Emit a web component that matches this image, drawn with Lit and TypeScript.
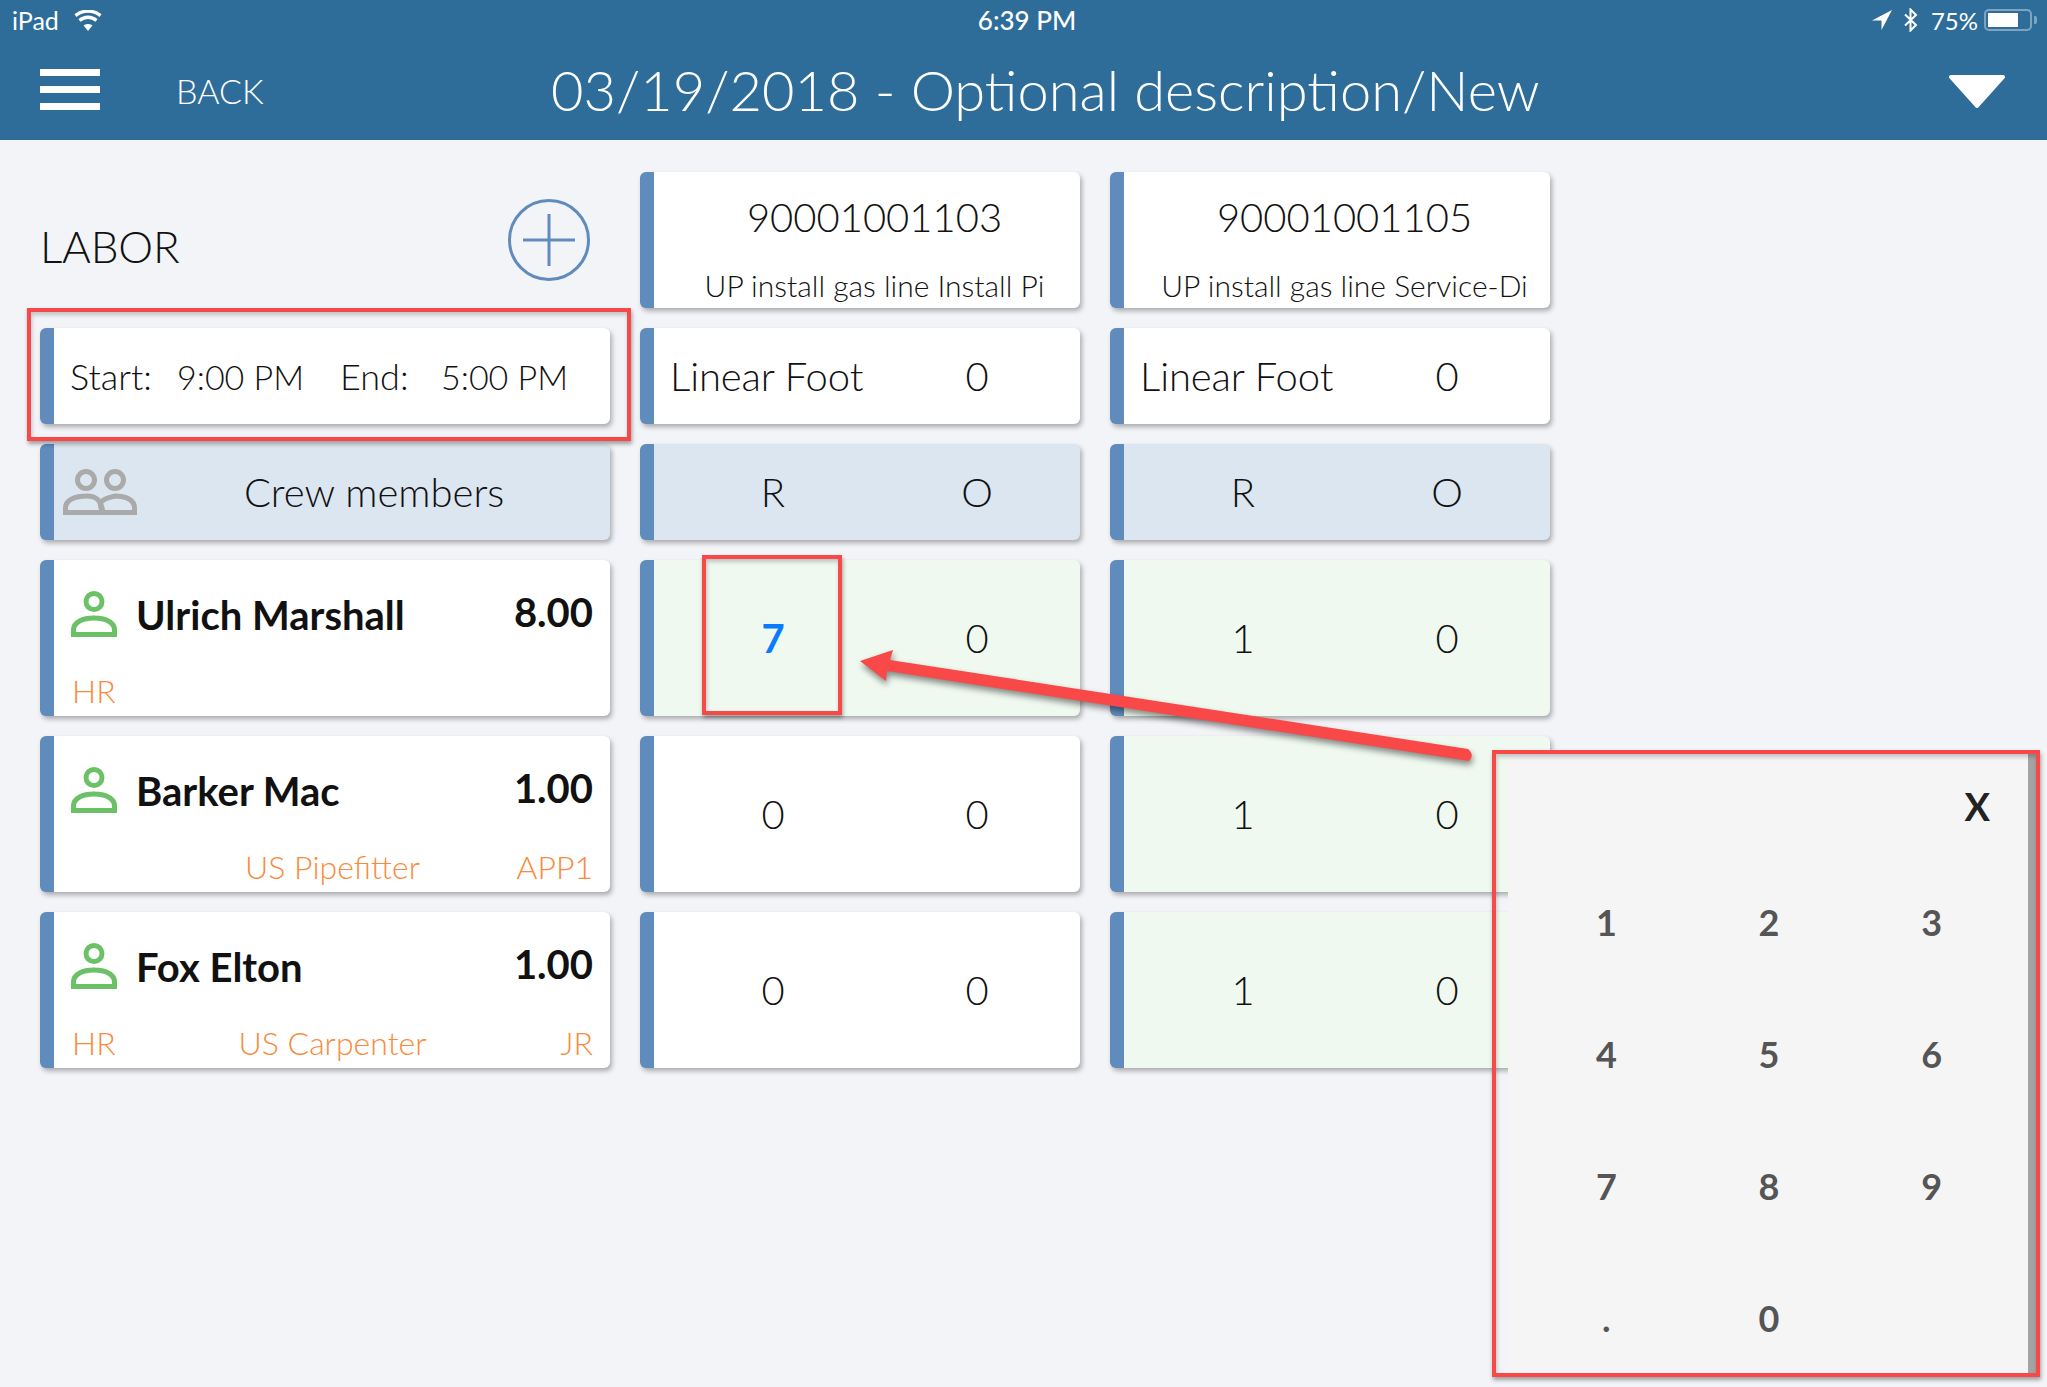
import { LitElement, html, css, svg } from "lit";
import { customElement } from "lit/decorators.js";
import { classMap } from "lit/directives/class-map.js";

const person = (color: string) => svg`
  <circle cx="23" cy="10.5" r="8" fill="none" stroke=${color} stroke-width="5" />
  <path d="M2.5 43.5V39C2.5 31 12 27 23 27S43.5 31 43.5 39V43.5Z" fill="none" stroke=${color} stroke-width="5" />
`;

const crew = [
  { name: "Ulrich Marshall", hours: "8.00", left: "HR", mid: "", right: "", cells: [["7", "0", true], ["1", "0", true]] },
  { name: "Barker Mac", hours: "1.00", left: "", mid: "US Pipefitter", right: "APP1", cells: [["0", "0", false], ["1", "0", true]] },
  { name: "Fox Elton", hours: "1.00", left: "HR", mid: "US Carpenter", right: "JR", cells: [["0", "0", false], ["1", "0", true]] },
];

const jobs = [
  { id: "90001001103", desc: "UP install gas line Install Pi" },
  { id: "90001001105", desc: "UP install gas line Service-Di" },
];

@customElement("app-root")
export class AppRoot extends LitElement {
  static styles = css`
    :host {
      display: block;
      position: relative;
      height: 1387px;
      overflow: hidden;
      background: #f2f4f8;
      color: #111;
      font-family: "Lato", "Liberation Sans", sans-serif;
      font-weight: 300;
    }

    header {
      height: 140px;
      background: #2e6d9a;
      color: #fff;
    }

    .status {
      height: 40px;
      padding: 0 10px 0 12px;
      display: flex;
      align-items: center;
      font-size: 25px;
      font-weight: 400;
    }

    .status .wifi {
      margin-left: 15px;
    }

    .status .time {
      position: absolute;
      left: 927px;
      width: 200px;
      text-align: center;
      font-size: 26px;
      font-weight: 500;
    }

    .status .right {
      margin-left: auto;
      display: flex;
      align-items: center;
      font-size: 24px;
    }

    .status .pct {
      margin: 0 6px 0 12px;
    }

    .battery {
      width: 48px;
      height: 22px;
      box-sizing: border-box;
      border: 2px solid #7fa4c0;
      border-radius: 5px;
      padding: 2px;
      margin-right: 2px;
    }

    .battery div {
      width: 30px;
      height: 100%;
      background: #fff;
    }

    .nub {
      width: 3px;
      height: 8px;
      background: #7fa4c0;
      border-radius: 0 2px 2px 0;
    }

    .nav {
      height: 100px;
      padding: 0 41px 0 40px;
      display: flex;
      align-items: center;
    }

    .burger {
      width: 60px;
      display: flex;
      flex-direction: column;
      gap: 10px;
      margin-top: -1px;
    }

    .burger div {
      height: 7px;
      background: #fff;
    }

    .back {
      margin-left: 76px;
      font-size: 34px;
      width: 86px;
      white-space: nowrap;
    }

    .title {
      margin-left: 289px;
      margin-top: -2px;
      font-size: 56px;
      white-space: nowrap;
    }

    .caret {
      margin-left: auto;
      margin-top: 2px;
    }

    .board {
      padding: 32px 0 0 40px;
      display: grid;
      grid-template-columns: 570px 440px 440px;
      grid-template-rows: 136px 96px 96px 156px 156px 156px;
      column-gap: 30px;
      row-gap: 20px;
    }

    .card {
      box-sizing: border-box;
      border-left: 14px solid #5f8bbd;
      border-radius: 6px;
      background: #fff;
      box-shadow: 2px 3px 5px rgba(0, 0, 0, 0.3);
    }

    .shade {
      background: #dce6f0;
    }

    .done {
      background: #eff9f0;
    }

    .labor {
      display: flex;
      align-items: center;
      justify-content: space-between;
      padding: 0 20px 0 0;
      font-size: 44px;
    }

    .labor span {
      margin-top: 12px;
      letter-spacing: -0.2px;
    }

    .job {
      padding-left: 15px;
      text-align: center;
    }

    .job .id {
      margin-top: 21px;
      font-size: 40px;
      line-height: 48px;
    }

    .job .desc {
      margin-top: 25px;
      font-size: 30px;
      line-height: 38px;
      white-space: nowrap;
      overflow: hidden;
    }

    .times {
      display: flex;
      align-items: center;
      padding-left: 16px;
      font-size: 34px;
    }

    .times .label {
      font-size: 36px;
    }

    .times span:nth-child(1) {
      width: 107px;
    }

    .times span:nth-child(2) {
      width: 163px;
    }

    .times span:nth-child(3) {
      width: 101px;
    }

    .crew-head {
      display: flex;
      align-items: center;
      padding-left: 9px;
      font-size: 40px;
    }

    .crew-head span {
      margin-left: 107px;
    }

    .worker {
      padding: 31px 17px 0 17px;
      display: flex;
      flex-direction: column;
    }

    .worker .top {
      display: flex;
      align-items: center;
      height: 46px;
    }

    .worker .name {
      margin-left: 19px;
      margin-top: 2px;
      font-size: 40px;
      font-weight: 700;
    }

    .worker .hours {
      margin-left: auto;
      margin-top: -4px;
      font-size: 40px;
      font-weight: 700;
    }

    .tags {
      margin-top: 38px;
      padding-left: 1px;
      display: grid;
      grid-template-columns: 1fr auto 1fr;
      font-size: 32px;
      line-height: 32px;
      color: #f98a3c;
    }

    .tags div:last-child {
      text-align: right;
    }

    .pair {
      display: grid;
      grid-template-columns: 204px 204px;
      padding-left: 17px;
      align-items: center;
      font-size: 40px;
      text-align: center;
    }

    .pair .unit {
      margin-left: -1px;
      text-align: left;
      white-space: nowrap;
      letter-spacing: -0.1px;
    }

    .active {
      color: #0a7bff;
      font-weight: 700;
    }

    .mark {
      position: absolute;
      box-sizing: border-box;
      border: 4px solid #f94848;
      box-shadow: 1px 3px 4px rgba(0, 0, 0, 0.35), inset 1px 3px 4px rgba(0, 0, 0, 0.2);
    }

    .mark.times-mark {
      left: 27px;
      top: 308px;
      width: 604px;
      height: 133px;
    }

    .mark.seven-mark {
      left: 702px;
      top: 555px;
      width: 140px;
      height: 160px;
    }

    .mark.pad-mark {
      left: 1492px;
      top: 750px;
      width: 548px;
      height: 627px;
    }

    .arrow {
      position: absolute;
      left: 0;
      top: 0;
      pointer-events: none;
      filter: drop-shadow(1px 4px 3px rgba(0, 0, 0, 0.45));
    }

    .pad {
      position: absolute;
      left: 1508px;
      top: 752px;
      width: 520px;
      height: 623px;
      box-sizing: border-box;
      padding: 32px 15px 0 17px;
      background: #f5f5f5;
      box-shadow: 10px 0 0 #a3a3a3;
      font-size: 36px;
      font-weight: 700;
      color: #555;
    }

    .pad .close {
      height: 44px;
      line-height: 44px;
      text-align: right;
      padding-right: 23px;
      font-size: 38px;
      color: #222;
    }

    .pad .keys {
      margin-top: 72px;
      display: grid;
      grid-template-columns: repeat(3, 1fr);
      row-gap: 88px;
      line-height: 44px;
      text-align: center;
    }
  `;

  render() {
    return html`
      <header>
        <div class="status">
          <span>iPad</span>
          <svg class="wifi" width="28" height="21" viewBox="0 0 28 21">
            <path d="M14 21 9.6 15.4C12 13.4 16 13.4 18.4 15.4Z" fill="#fff" />
            <path d="M5.5 10.5C10.5 6.2 17.5 6.2 22.5 10.5M1.5 5.6C9 -.4 19 -.4 26.5 5.6" fill="none" stroke="#fff" stroke-width="3.4" />
          </svg>
          <span class="time">6:39 PM</span>
          <div class="right">
            <svg width="20" height="20" viewBox="0 0 20 20" style="margin-right:11px">
              <path d="M20 0 0 10.5H9.5V20Z" fill="#fff" />
            </svg>
            <svg width="16" height="24" viewBox="0 0 16 24">
              <path d="M2 6.5 13 17 7.5 22.5V1.5L13 7 2 17.5" fill="none" stroke="#fff" stroke-width="2" />
            </svg>
            <span class="pct">75%</span>
            <div class="battery"><div></div></div>
            <div class="nub"></div>
          </div>
        </div>
        <div class="nav">
          <div class="burger"><div></div><div></div><div></div></div>
          <div class="back">BACK</div>
          <div class="title">03/19/2018 - Optional description/New</div>
          <svg class="caret" width="58" height="33" viewBox="0 0 58 33">
            <path d="M3 2H55L29 31Z" fill="#fff" stroke="#fff" stroke-width="4" stroke-linejoin="round" />
          </svg>
        </div>
      </header>

      <section class="board">
        <div class="labor">
          <span>LABOR</span>
          <svg width="82" height="82" viewBox="0 0 82 82">
            <circle cx="41" cy="41" r="39.5" fill="none" stroke="#5f8bbd" stroke-width="3" />
            <path d="M41 15V67M15 41H67" stroke="#5f8bbd" stroke-width="3" />
          </svg>
        </div>
        ${jobs.map(
          (j) => html`<div class="card job">
            <div class="id">${j.id}</div>
            <div class="desc">${j.desc}</div>
          </div>`
        )}

        <div class="card times">
          <span class="label">Start:</span><span>9:00 PM</span><span class="label">End:</span><span>5:00 PM</span>
        </div>
        ${jobs.map(
          () => html`<div class="card pair"><div class="unit">Linear Foot</div><div>0</div></div>`
        )}

        <div class="card shade crew-head">
          <svg width="74" height="46" viewBox="0 0 74 46">
            <circle cx="23" cy="11" r="8.5" fill="none" stroke="#aaa" stroke-width="5" />
            <circle cx="52" cy="11" r="8.5" fill="none" stroke="#aaa" stroke-width="5" />
            <path d="M2.5 43.5V39C2.5 31 12 27 24 27C33 27 38 31 40 43.5ZM40 43.5C36 36 34 31 52 27C63 27 71.5 31 71.5 39V43.5Z" fill="none" stroke="#aaa" stroke-width="5" />
          </svg>
          <span>Crew members</span>
        </div>
        ${jobs.map(
          () => html`<div class="card shade pair"><div>R</div><div>O</div></div>`
        )}

        ${crew.map(
          (w) => html`
            <div class="card worker">
              <div class="top">
                <svg width="46" height="46" viewBox="0 0 46 46">${person("#6cc066")}</svg>
                <div class="name">${w.name}</div>
                <div class="hours">${w.hours}</div>
              </div>
              <div class="tags">
                <div>${w.left}</div>
                <div>${w.mid}</div>
                <div>${w.right}</div>
              </div>
            </div>
            ${w.cells.map(
              (c) => html`<div class="card pair ${classMap({ done: c[2] === true })}">
                <div class=${classMap({ active: c[0] === "7" })}>${c[0]}</div>
                <div>${c[1]}</div>
              </div>`
            )}
          `
        )}
      </section>

      <div class="pad">
        <div class="close">X</div>
        <div class="keys">
          ${["1", "2", "3", "4", "5", "6", "7", "8", "9", ".", "0", ""].map(
            (k) => html`<div>${k}</div>`
          )}
        </div>
      </div>

      <div class="mark times-mark"></div>
      <div class="mark seven-mark"></div>
      <div class="mark pad-mark"></div>

      <svg class="arrow" width="2047" height="1387" viewBox="0 0 2047 1387">
        <path d="M860 661 893 650 890 660 1468 749Q1475 755 1469 761L887 671 886 681Z" fill="#f94848" />
      </svg>
    `;
  }
}
